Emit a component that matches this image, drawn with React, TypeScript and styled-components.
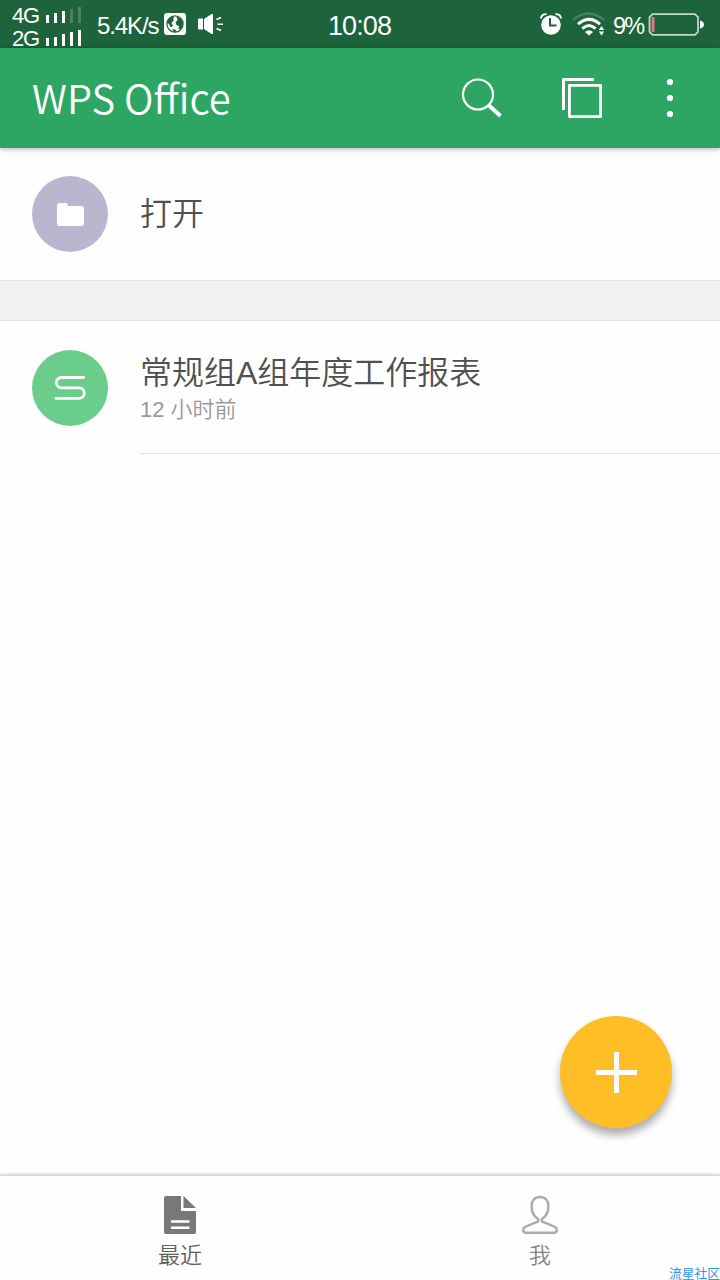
import React from 'react';
import styled, { createGlobalStyle } from 'styled-components';

const GlobalStyle = createGlobalStyle`
  * { box-sizing: border-box; }
  body { margin: 0; background: #fff; }
  svg { display: block; flex: none; }
`;

const sans = '"Liberation Sans", "Noto Sans CJK SC", sans-serif';
const cjk = '"Noto Sans CJK SC", sans-serif';

const Screen = styled.div`
  width: 720px;
  height: 1280px;
  display: flex;
  flex-direction: column;
  overflow: hidden;
  background: #fefefe;
  font-family: ${sans};
`;

const StatusBar = styled.header`
  height: 48px;
  flex: none;
  display: grid;
  grid-template-columns: 328px 212px 180px;
  background: #1d643c;
  color: #fff;
`;

const StatusGroup = styled.div`
  display: flex;
  align-items: center;
  height: 48px;
`;

const SignalStack = styled.div`
  width: 97px;
  flex: none;
  padding: 3px 0 0 12px;
  display: flex;
  flex-direction: column;
  gap: 1px;
`;

const SignalRow = styled.div`
  display: flex;
  height: 22px;
`;

const SignalLabel = styled.span`
  width: 34px;
  font-size: 22px;
  line-height: 26px;
  letter-spacing: -1.2px;
`;

const Bars = styled.div`
  display: flex;
  align-items: flex-end;
  gap: 5px;
  height: 20px;
`;

const Bar = styled.i<{ $h: number; $dim?: boolean }>`
  width: 3px;
  height: ${(p) => p.$h}px;
  background: ${(p) => (p.$dim ? '#48825f' : '#fff')};
`;

const StatusText = styled.span<{ $w: number; $size: number; $track: number }>`
  flex: none;
  width: ${(p) => p.$w}px;
  font-size: ${(p) => p.$size}px;
  letter-spacing: ${(p) => p.$track}px;
  line-height: 28px;
  padding-top: 4px;
  white-space: nowrap;
`;

const IconSlot = styled.span<{ $left?: number; $right?: number }>`
  flex: none;
  margin-left: ${(p) => p.$left ?? 0}px;
  margin-right: ${(p) => p.$right ?? 0}px;
`;

const AppBar = styled.div`
  height: 100px;
  flex: none;
  display: flex;
  align-items: center;
  padding: 0 45px 0 32px;
  background: #2ea663;
  color: #fff;
  box-shadow: 0 1px 5px rgba(0, 0, 0, 0.3);
`;

const Title = styled.h1`
  margin: 0;
  flex: 1;
  font-family: ${cjk};
  font-size: 40px;
  font-weight: 350;
  line-height: 60px;
  padding-bottom: 2px;
`;

const Actions = styled.div`
  display: flex;
  align-items: center;
`;

const ActionButton = styled.button<{ $gap: number }>`
  border: 0;
  padding: 0;
  margin-left: ${(p) => p.$gap}px;
  background: none;
`;

const Content = styled.main`
  flex: 1;
  display: flex;
  flex-direction: column;
`;

const OpenRow = styled.div`
  height: 132px;
  display: flex;
  align-items: center;
  padding-left: 32px;
`;

const Disc = styled.div<{ $color: string }>`
  width: 76px;
  height: 76px;
  flex: none;
  margin-right: 32px;
  border-radius: 50%;
  background: ${(p) => p.$color};
  display: flex;
  align-items: center;
  justify-content: center;
`;

const Divider = styled.div`
  height: 41px;
  background: #f1f1f1;
  border-top: 1px solid #e3e3e3;
  border-bottom: 1px solid #e3e3e3;
`;

const FileRow = styled.div`
  height: 133px;
  display: flex;
  padding-left: 32px;
`;

const FileDisc = styled(Disc)`
  margin-top: 29px;
`;

const FileInfo = styled.div`
  flex: 1;
  padding-top: 31px;
  border-bottom: 1px solid #e0e0e0;
`;

const ItemName = styled.div`
  font-size: 32px;
  line-height: 42px;
  font-weight: 350;
  color: #505050;
  white-space: nowrap;
`;

const ItemTime = styled.div`
  font-size: 22px;
  line-height: 32px;
  font-weight: 350;
  color: #999;
`;

const Fab = styled.button`
  align-self: flex-end;
  width: 112px;
  height: 112px;
  margin: auto 48px 46px 0;
  padding: 0;
  border: 0;
  border-radius: 50%;
  background: #ffbe26;
  box-shadow: 0 7px 9px rgba(0, 0, 0, 0.32);
  display: flex;
  align-items: center;
  justify-content: center;
`;

const TabBar = styled.nav`
  height: 106px;
  flex: none;
  display: flex;
  position: relative;
  border-top: 2px solid #dcdcdc;
  box-shadow: 0 -1px 2px rgba(0, 0, 0, 0.08);
`;

const Tab = styled.div<{ $color: string }>`
  flex: 1;
  display: flex;
  flex-direction: column;
  align-items: center;
  padding-top: 19px;
  color: ${(p) => p.$color};
`;

const TabLabel = styled.span`
  font-size: 22px;
  line-height: 30px;
  margin-top: 6px;
  font-weight: 350;
`;

const Watermark = styled.span`
  position: absolute;
  right: 0;
  bottom: 0;
  font-size: 12.75px;
  line-height: 13px;
  white-space: nowrap;
  color: #2f93f2;
`;

const GlobeIcon = () => (
  <svg width="22" height="22" viewBox="0 0 22 22">
    <rect width="22" height="22" rx="3" fill="#fff" />
    <circle cx="11" cy="11" r="8.100" fill="none" stroke="#1d643c" strokeWidth="1.200" />
    <path d="M3 10Q4 5 9 3l1 1.500-1 1.500 1 1.500-2 1.500-.5 2 1.500 1-1 2-2-.5-1-2.500zM12.500 3.500Q18 5 19 10q0 4-3 6.500l-1.500-.5.5-3-2.500-1-1-2.500 2-2.500zM8 16l3 .5 2 2-3 .5z" fill="#1d643c" />
  </svg>
);

const SpeakerIcon = () => (
  <svg width="26" height="20" viewBox="0 0 26 20">
    <path d="M0 5.500q0-1 1-1h4v11H1q-1 0-1-1zM6 5l7.500-5H15v20h-1.500L6 15z" fill="#fff" />
    <path d="M18.500 5.600l4.500-2M19.500 10.200H25M18.500 14.600l4.500 2" stroke="#fff" strokeWidth="1.600" />
  </svg>
);

const AlarmIcon = () => (
  <svg width="22" height="22" viewBox="0 0 22 22">
    <circle cx="11" cy="12" r="9.800" fill="#fff" />
    <path d="M.8 5.500Q1.500 1.200 6.500 1M21.200 5.500Q20.500 1.200 15.500 1" fill="none" stroke="#fff" strokeWidth="1.800" />
    <path d="M10 5v7.500h6.500" fill="none" stroke="#1d643c" strokeWidth="2" />
  </svg>
);

const WifiIcon = () => (
  <svg width="33" height="24" viewBox="0 0 33 24">
    <g fill="none">
      <path d="M1 8Q16.500-5 32 8" stroke="#48825f" strokeWidth="2.200" />
      <path d="M6 12.200Q17 2.500 28 12.200M10.300 16.600Q17 10.500 23.700 16.600" stroke="#fff" strokeWidth="3" />
    </g>
    <path d="M13 20q4-3.500 8 0l-4 3.500zM29.500 14l2.700 4h-5.400zM26.800 19.500h5.400l-2.700 4z" fill="#fff" />
  </svg>
);

const BatteryIcon = () => (
  <svg width="57" height="23" viewBox="0 0 57 23">
    <path d="M4.500 1.200H47l3 3v14.600l-3 3H4.500l-3-3V4.200z" fill="none" stroke="#c3d5ca" strokeWidth="1.800" strokeLinejoin="round" />
    <rect x="3.500" y="4" width="3" height="15" fill="#e7737e" />
    <path d="M52 7.500q4 1 4 4t-4 4z" fill="#fff" />
  </svg>
);

const SearchIcon = () => (
  <svg width="42" height="42" viewBox="0 0 42 42" fill="none" stroke="#fff">
    <circle cx="17" cy="17.500" r="15" strokeWidth="2.200" />
    <path d="M27 28l3 2" strokeWidth="2.500" />
    <path d="M28 28.500L39.500 39" strokeWidth="4" />
  </svg>
);

const WindowsIcon = () => (
  <svg width="40" height="40" viewBox="0 0 40 40" fill="none" stroke="#fff" strokeLinejoin="round">
    <path d="M1.500 32V1.500H32" strokeWidth="3" />
    <rect x="7.400" y="7.400" width="31.200" height="31.200" strokeWidth="2.800" />
  </svg>
);

const MoreIcon = () => (
  <svg width="10" height="40" viewBox="0 0 10 40" fill="#fff">
    <circle cx="5" cy="4" r="3.100" />
    <circle cx="5" cy="20" r="3.100" />
    <circle cx="5" cy="36" r="3.100" />
  </svg>
);

const FolderIcon = () => (
  <svg width="27" height="23" viewBox="0 0 27 23">
    <path d="M3 0h5.500q2 0 2.500 3h13q3 0 3 3v14q0 3-3 3H3q-3 0-3-3V3q0-3 3-3z" fill="#fff" />
  </svg>
);

const SheetIcon = () => (
  <svg width="32" height="26" viewBox="0 0 32 26" fill="none" stroke="#fff" strokeWidth="2.800" strokeLinecap="round">
    <path d="M29.500 2.500H7.500a5 5 0 0 0 0 10.300H25a5.300 5.300 0 0 1 0 10.600H2" />
  </svg>
);

const PlusIcon = () => (
  <svg width="42" height="42" viewBox="0 0 42 42">
    <path d="M19 1h5v18h18v5H24v18h-5V24H1v-5h18z" fill="#fff" />
  </svg>
);

const DocIcon = () => (
  <svg width="32" height="40" viewBox="0 0 32 40">
    <path d="M2 1h15v15h15v21q0 2-2 2H2q-2 0-2-2V3q0-2 2-2zM19.500 1L32 13H19.500z" fill="#787878" />
    <path d="M7 26.500h18.500M7 32.700h18.500" stroke="#fff" strokeWidth="2.600" />
  </svg>
);

const PersonIcon = () => (
  <svg width="36" height="40" viewBox="0 0 36 40" fill="none" stroke="#aaa" strokeWidth="2.400" strokeLinejoin="round">
    <path d="M16.200 24C12 21.500 9.600 16.500 9.600 11.500C9.600 5.500 12.500 2 18 2s8.400 3.500 8.400 9.500c0 5-2.400 10-6.600 12.500v2.300l12.200 5.200q2.700 1.200 2.700 3.300v.700q0 2.200-2.500 2.200H3.800q-2.500 0-2.500-2.200v-.700q0-2.100 2.700-3.300l12.200-5.200z" />
  </svg>
);

const Signal = ({ label, heights, active }: { label: string; heights: number[]; active: number }) => (
  <SignalRow>
    <SignalLabel>{label}</SignalLabel>
    <Bars>
      {heights.map((h, i) => (
        <Bar key={i} $h={h} $dim={i >= active} />
      ))}
    </Bars>
  </SignalRow>
);

export default function App() {
  return (
    <Screen>
      <GlobalStyle />
      <StatusBar>
        <StatusGroup>
          <SignalStack>
            <Signal label="4G" heights={[8, 10, 12, 14, 16]} active={3} />
            <Signal label="2G" heights={[8, 9, 12, 14, 16]} active={5} />
          </SignalStack>
          <StatusText $w={67} $size={24} $track={-1.1}>5.4K/s</StatusText>
          <GlobeIcon />
          <IconSlot $left={12}><SpeakerIcon /></IconSlot>
        </StatusGroup>
        <StatusGroup>
          <StatusText $w={70} $size={27} $track={-0.9}>10:08</StatusText>
        </StatusGroup>
        <StatusGroup>
          <AlarmIcon />
          <IconSlot $left={10} $right={8}><WifiIcon /></IconSlot>
          <StatusText $w={35} $size={23.5} $track={-1.7}>9%</StatusText>
          <BatteryIcon />
        </StatusGroup>
      </StatusBar>
      <AppBar>
        <Title>WPS Office</Title>
        <Actions>
          <ActionButton $gap={0} aria-label="Search"><SearchIcon /></ActionButton>
          <ActionButton $gap={59} aria-label="Windows"><WindowsIcon /></ActionButton>
          <ActionButton $gap={63} aria-label="More"><MoreIcon /></ActionButton>
        </Actions>
      </AppBar>
      <Content>
        <OpenRow>
          <Disc $color="#b9b6d0"><FolderIcon /></Disc>
          <ItemName>打开</ItemName>
        </OpenRow>
        <Divider />
        <FileRow>
          <FileDisc $color="#6bcd8c"><SheetIcon /></FileDisc>
          <FileInfo>
            <ItemName>常规组A组年度工作报表</ItemName>
            <ItemTime>12 小时前</ItemTime>
          </FileInfo>
        </FileRow>
        <Fab aria-label="New"><PlusIcon /></Fab>
      </Content>
      <TabBar>
        <Tab $color="#606060">
          <DocIcon />
          <TabLabel>最近</TabLabel>
        </Tab>
        <Tab $color="#858585">
          <PersonIcon />
          <TabLabel>我</TabLabel>
        </Tab>
        <Watermark>流星社区</Watermark>
      </TabBar>
    </Screen>
  );
}
